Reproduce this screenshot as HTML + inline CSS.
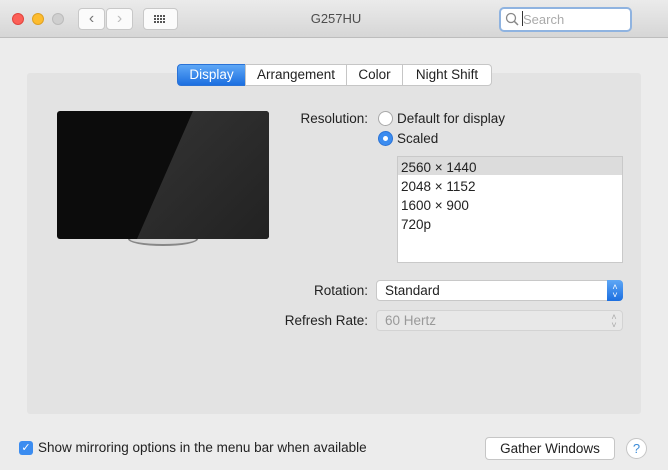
<!DOCTYPE html>
<html><head><style>
*{box-sizing:border-box;margin:0;padding:0}
body{width:668px;height:470px;background:#ececec;font-family:"Liberation Sans",sans-serif;font-size:13.5px;color:#222;position:relative;overflow:hidden}
.a{position:absolute}
.tb{left:0;top:0;width:668px;height:38px;background:linear-gradient(#ebebeb,#d6d6d6);border-bottom:1px solid #bdbdbd}
.dot{width:12px;height:12px;border-radius:50%;top:13px}
.btn{background:#fbfbfb;border:1px solid #c8c8c8;border-radius:4px;height:22px;top:8px}
.box{left:27px;top:73px;width:614px;height:341px;background:#e3e3e3;border-radius:3px}
.tab{top:64px;height:22px;background:#fff;border:1px solid #c6c6c6;text-align:center;line-height:20px}
.lbl{text-align:right}
.radio{width:15px;height:15px;border-radius:50%;border:1px solid #a8a8a8;background:#fff}
</style></head><body>
<div class="a tb"></div>
<div class="a dot" style="left:12px;background:#fc5f57;border:1px solid #e0443e"></div>
<div class="a dot" style="left:32px;background:#fdbc2e;border:1px solid #dea123"></div>
<div class="a dot" style="left:52px;background:#cfcfcf;border:1px solid #bbb"></div>
<div class="a btn" style="left:78px;width:27px;color:#777;text-align:center;line-height:19px;font-size:16px">‹</div>
<div class="a btn" style="left:106px;width:27px;color:#bbb;text-align:center;line-height:19px;font-size:16px">›</div>
<div class="a btn" style="left:143px;width:35px">
<svg width="35" height="22" style="position:absolute;left:-1px;top:-1px"><g fill="#555"><rect x="11" y="7" width="2" height="2"/><rect x="14" y="7" width="2" height="2"/><rect x="17" y="7" width="2" height="2"/><rect x="20" y="7" width="2" height="2"/><rect x="11" y="10" width="2" height="2"/><rect x="14" y="10" width="2" height="2"/><rect x="17" y="10" width="2" height="2"/><rect x="20" y="10" width="2" height="2"/><rect x="11" y="13" width="2" height="2"/><rect x="14" y="13" width="2" height="2"/><rect x="17" y="13" width="2" height="2"/><rect x="20" y="13" width="2" height="2"/></g></svg></div>
<div class="a" style="left:0;width:668px;top:11px;text-align:center;color:#4d4d4d;font-size:13px;padding-left:4px">G257HU</div>
<div class="a" style="left:499px;top:7px;width:133px;height:25px;background:#fff;border:2px solid #8fb3e0;border-radius:5px"></div>
<svg class="a" style="left:505px;top:12px" width="14" height="14"><circle cx="6" cy="6" r="4.5" fill="none" stroke="#888" stroke-width="1.3"/><line x1="9.3" y1="9.3" x2="13" y2="13" stroke="#888" stroke-width="1.5"/></svg>
<div class="a" style="left:522px;top:11px;width:1px;height:15px;background:#333"></div>
<div class="a" style="left:523px;top:12px;color:#aaa;font-size:13px">Search</div>
<div class="a box"></div>
<div class="a tab" style="left:177px;width:69px;background:linear-gradient(#5ea7f6,#1c6fe0);color:#fff;border-color:#2a72d6;border-radius:4px 0 0 4px">Display</div>
<div class="a tab" style="left:245px;width:102px">Arrangement</div>
<div class="a tab" style="left:346px;width:57px">Color</div>
<div class="a tab" style="left:402px;width:90px;border-radius:0 4px 4px 0">Night Shift</div>
<div class="a" style="left:128px;top:232px;width:70px;height:14px;border:2px solid #888;border-radius:50%;background:#d8d8d8"></div>
<div class="a" style="left:57px;top:111px;width:212px;height:128px;border-radius:3px;background:#0c0c0c;overflow:hidden">
<div style="position:absolute;inset:0;background:linear-gradient(135deg,#3a3a3a,#222);clip-path:polygon(136px 0,212px 0,212px 128px,80px 128px)"></div></div>
<div class="a lbl" style="left:270px;width:98px;top:111px">Resolution:</div>
<div class="a radio" style="left:378px;top:111px"></div>
<div class="a" style="left:397px;top:111px">Default for display</div>
<div class="a radio" style="left:378px;top:131px;background:#3b8cf0;border-color:#2a73d6"><div style="width:5px;height:5px;border-radius:50%;background:#fff;margin:4px"></div></div>
<div class="a" style="left:397px;top:131px">Scaled</div>
<div class="a" style="left:397px;top:156px;width:226px;height:107px;background:#fff;border:1px solid #c9c9c9"></div>
<div class="a" style="left:398px;top:157px;width:224px;height:18px;background:#dcdcdc"></div>
<div class="a" style="left:401px;top:158px;line-height:19px">2560 × 1440<br>2048 × 1152<br>1600 × 900<br>720p</div>
<div class="a lbl" style="left:270px;width:98px;top:283px">Rotation:</div>
<div class="a" style="left:376px;top:280px;width:247px;height:21px;background:#fff;border:1px solid #c8c8c8;border-radius:4px;padding:2px 0 0 8px">Standard</div>
<div class="a" style="left:607px;top:280px;width:16px;height:21px;background:linear-gradient(#5ea7f6,#1c6fe0);border-radius:0 4px 4px 0;color:#fff;font-size:9px;text-align:center;line-height:8px;padding-top:3px">˄<br>˅</div>
<div class="a lbl" style="left:270px;width:98px;top:313px">Refresh Rate:</div>
<div class="a" style="left:376px;top:310px;width:247px;height:21px;background:#e8e8e8;border:1px solid #d3d3d3;border-radius:4px;padding:2px 0 0 8px;color:#999">60 Hertz</div>
<div class="a" style="left:607px;top:313px;width:14px;color:#aaa;font-size:9px;text-align:center;line-height:8px">˄<br>˅</div>
<div class="a" style="left:19px;top:441px;width:14px;height:14px;background:#3b8cf0;border-radius:3px;color:#fff;font-size:11px;text-align:center;line-height:14px">✓</div>
<div class="a" style="left:38px;top:440px">Show mirroring options in the menu bar when available</div>
<div class="a" style="left:485px;top:437px;width:130px;height:23px;background:#fff;border:1px solid #c6c6c6;border-radius:4px;text-align:center;line-height:21px">Gather Windows</div>
<div class="a" style="left:626px;top:438px;width:21px;height:21px;border-radius:50%;background:#fff;border:1px solid #c6c6c6;text-align:center;line-height:19px;color:#3d8cd8;font-size:13px">?</div>
</body></html>
